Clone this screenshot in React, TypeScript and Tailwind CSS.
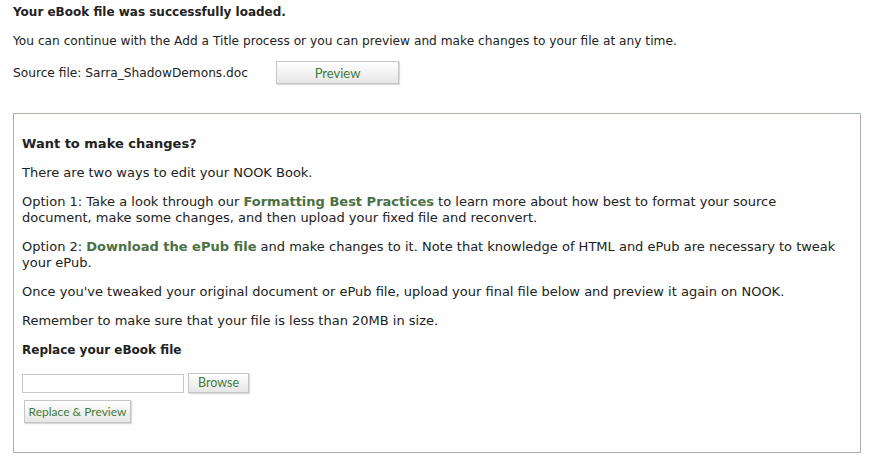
export default function App() {
  return (
    <div className="min-h-screen bg-white text-[#222] text-[12.2px] leading-[16px] font-['DejaVu_Sans',Verdana,sans-serif]">
      <div className="px-[13px] pt-[4px]">
        <h1 className="font-bold text-[12px] leading-[16px]">Your eBook file was successfully loaded.</h1>
        <p className="mt-[13px]">
          You can continue with the Add a Title process or you can preview and make changes to your file at any time.
        </p>
        <div className="mt-[12px] flex items-center">
          <span>Source file: Sarra_ShadowDemons.doc</span>
          <button className="ml-[28px] w-[123px] h-[23px] border border-[#c6c6c6] bg-gradient-to-b from-white to-[#e6e6e6] shadow-[1px_1px_1px_rgba(0,0,0,0.15)] text-[#3f7a3a] text-[13px] font-['Lato',sans-serif]">
            Preview
          </button>
        </div>
      </div>

      <div className="mx-[13px] mt-[29px] w-[848px] h-[340px] border border-[#a3b5a3] bg-[#fdfefd] pl-[8px] pr-[16px] pt-[22px] text-[13px]">
        <h2 className="font-bold">Want to make changes?</h2>
        <p className="mt-[13px]">There are two ways to edit your NOOK Book.</p>
        <p className="mt-[13px]">
          Option 1: Take a look through our{' '}
          <a className="font-bold text-[#4b7043]">Formatting Best Practices</a> to learn more about how best to format your source
          document, make some changes, and then upload your fixed file and reconvert.
        </p>
        <p className="mt-[13px]">
          Option 2: <a className="font-bold text-[#4b7043]">Download the ePub file</a> and make changes to it. Note that knowledge of HTML and ePub are necessary to tweak
          your ePub.
        </p>
        <p className="mt-[13px]">
          Once you've tweaked your original document or ePub file, upload your final file below and preview it again on NOOK.
        </p>
        <p className="mt-[13px]">Remember to make sure that your file is less than 20MB in size.</p>
        <h3 className="mt-[13px] font-bold text-[12px]">Replace your eBook file</h3>
        <div className="mt-[15px] flex items-center">
          <input type="text" className="w-[162px] h-[19px] border border-[#c8c8c8] bg-white outline-none" />
          <button className="ml-[4px] w-[61px] h-[20px] border border-[#c6c6c6] bg-gradient-to-b from-white to-[#e6e6e6] shadow-[1px_1px_1px_rgba(0,0,0,0.15)] text-[#3f7a3a] text-[12.5px] font-['Lato',sans-serif]">
            Browse
          </button>
        </div>
        <button className="mt-[7px] ml-[2px] w-[107px] h-[23px] border border-[#c6c6c6] bg-gradient-to-b from-white to-[#e6e6e6] shadow-[1px_1px_1px_rgba(0,0,0,0.15)] text-[#3f7a3a] text-[12px] font-['Lato',sans-serif]">
          Replace &amp; Preview
        </button>
      </div>
    </div>
  )
}
